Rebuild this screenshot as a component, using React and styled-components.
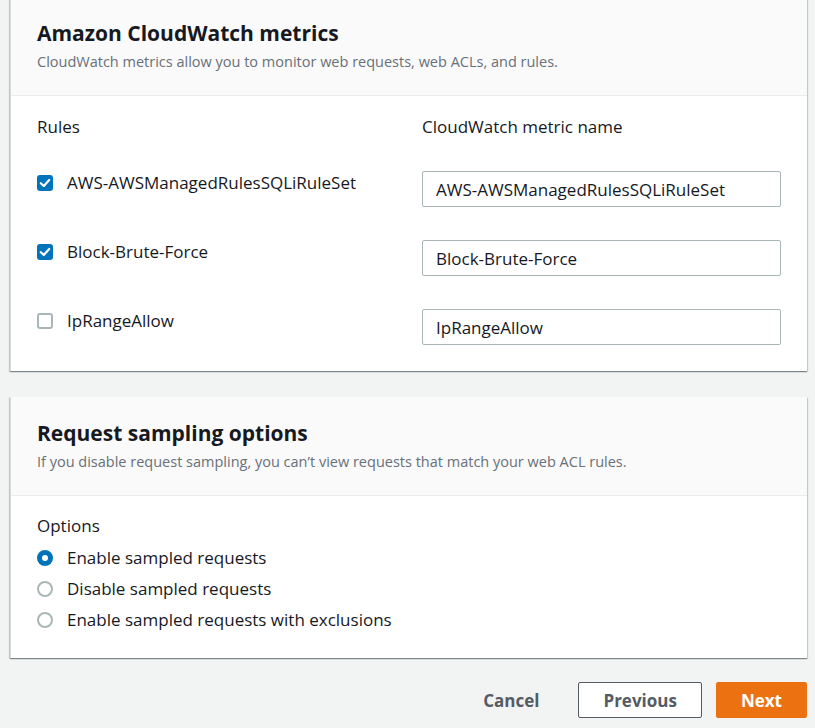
import React from "react";
import styled, { createGlobalStyle } from "styled-components";

const Global = createGlobalStyle`
  html, body { margin: 0; padding: 0; background: #f2f3f3; }
  body { font-family: "Open Sans", "Noto Sans", sans-serif; color: #16191f; }
  * { box-sizing: border-box; }
`;

const Page = styled.div`
  width: 815px;
  padding: 0 8px 0 10px;
  display: flex;
  flex-direction: column;
  gap: 26px;
`;

const Card = styled.section`
  background: #ffffff;
  border-left: 1px solid #d5dbdb;
  box-shadow: 0 1px 1px 0 rgba(0, 28, 36, 0.3), 1px 1px 1px 0 rgba(0, 28, 36, 0.15),
    -1px 1px 1px 0 rgba(0, 28, 36, 0.15);
  margin-top: ${(p) => (p.$first ? "-3px" : "0")};
`;

const Header = styled.header`
  background: #fafafa;
  border-bottom: 1px solid #eaeded;
  padding: 22px 26px 23px;
`;

const Title = styled.h2`
  margin: 0;
  font-size: 21px;
  line-height: 28px;
  font-weight: 700;
  color: #16191f;
`;

const Subtitle = styled.p`
  margin: 5px 0 0;
  font-size: 14.5px;
  line-height: 20px;
  color: #687078;
`;

const Body = styled.div`
  padding: ${(p) => p.$pad};
`;

const Grid = styled.div`
  display: grid;
  grid-template-columns: 1fr 1fr;
  column-gap: 26px;
  row-gap: 33px;
`;

const Label = styled.div`
  font-size: 17px;
  line-height: 22px;
  color: #16191f;
  margin-bottom: ${(p) => p.$mb || "0"};
`;

const CheckItem = styled.label`
  display: flex;
  align-items: center;
  gap: 14px;
  font-size: 17px;
  line-height: 22px;
  padding-top: 1px;
  align-self: start;
`;

const Box = styled.span`
  width: 16px;
  height: 16px;
  border-radius: 3px;
  flex: none;
  display: flex;
  align-items: center;
  justify-content: center;
  background: ${(p) => (p.$checked ? "#0073bb" : "#ffffff")};
  border: ${(p) => (p.$checked ? "none" : "2px solid #aab7b8")};
`;

const Input = styled.div`
  height: 36px;
  border: 1px solid #aab7b8;
  border-radius: 2px;
  padding: 0 13px;
  display: flex;
  align-items: center;
  font-size: 17px;
  color: #16191f;
  background: #fff;
`;

const RadioList = styled.div`
  display: flex;
  flex-direction: column;
`;

const RadioItem = styled.label`
  display: flex;
  align-items: center;
  gap: 14px;
  height: 31px;
  font-size: 17px;
  color: #16191f;
`;

const Dot = styled.span`
  width: 16px;
  height: 16px;
  border-radius: 50%;
  flex: none;
  background: #fff;
  border: ${(p) => (p.$checked ? "5px solid #0073bb" : "2px solid #aab7b8")};
`;

const Footer = styled.div`
  display: flex;
  justify-content: flex-end;
  align-items: center;
  gap: 14px;
  margin-top: -2px;
`;

const Button = styled.button`
  height: 36px;
  padding: 0 24px;
  font-family: inherit;
  font-size: 17px;
  font-weight: 700;
  border-radius: 2px;
  cursor: pointer;
  color: ${(p) => (p.$variant === "primary" ? "#ffffff" : "#545b64")};
  background: ${(p) =>
    p.$variant === "primary" ? "#ec7211" : p.$variant === "normal" ? "#ffffff" : "transparent"};
  border: 1px solid
    ${(p) =>
      p.$variant === "primary" ? "#ec7211" : p.$variant === "normal" ? "#545b64" : "transparent"};
`;

const Check = () => (
  <svg width="12" height="12" viewBox="0 0 12 12">
    <path d="M1.8 6.2 L4.8 9 L10.2 3" fill="none" stroke="#fff" strokeWidth="2.2" strokeLinecap="round" strokeLinejoin="round" />
  </svg>
);

const rules = [
  { name: "AWS-AWSManagedRulesSQLiRuleSet", checked: true },
  { name: "Block-Brute-Force", checked: true },
  { name: "IpRangeAllow", checked: false },
];

const options = [
  { label: "Enable sampled requests", checked: true },
  { label: "Disable sampled requests", checked: false },
  { label: "Enable sampled requests with exclusions", checked: false },
];

export default function App() {
  return (
    <>
      <Global />
      <Page>
        <Card $first>
          <Header>
            <Title>Amazon CloudWatch metrics</Title>
            <Subtitle>CloudWatch metrics allow you to monitor web requests, web ACLs, and rules.</Subtitle>
          </Header>
          <Body $pad="20px 26px 26px">
            <Grid>
              <Label>Rules</Label>
              <Label>CloudWatch metric name</Label>
              {rules.map((r) => (
                <React.Fragment key={r.name}>
                  <CheckItem>
                    <Box $checked={r.checked}>{r.checked && <Check />}</Box>
                    {r.name}
                  </CheckItem>
                  <Input>{r.name}</Input>
                </React.Fragment>
              ))}
            </Grid>
          </Body>
        </Card>
        <Card>
          <Header>
            <Title>Request sampling options</Title>
            <Subtitle>If you disable request sampling, you can’t view requests that match your web ACL rules.</Subtitle>
          </Header>
          <Body $pad="19px 26px 23px">
            <Label $mb="5px">Options</Label>
            <RadioList>
              {options.map((o) => (
                <RadioItem key={o.label}>
                  <Dot $checked={o.checked} />
                  {o.label}
                </RadioItem>
              ))}
            </RadioList>
          </Body>
        </Card>
        <Footer>
          <Button $variant="link">Cancel</Button>
          <Button $variant="normal">Previous</Button>
          <Button $variant="primary">Next</Button>
        </Footer>
      </Page>
    </>
  );
}
